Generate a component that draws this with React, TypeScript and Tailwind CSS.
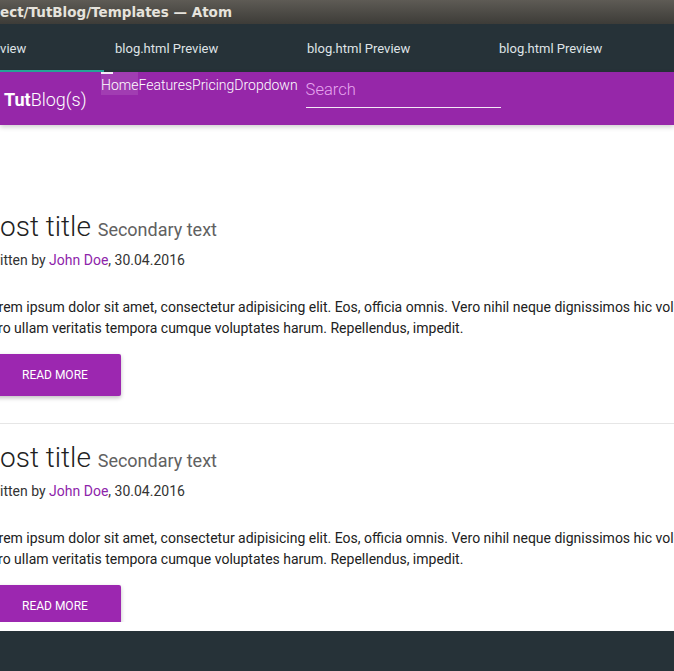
import React from 'react'

const roboto = { fontFamily: 'Roboto, "Liberation Sans", sans-serif' }

function Post() {
	return (
		<div>
			{/* Заголовок поста */}
			<h4 className="text-[28px] leading-[34px] font-light text-[#212121] whitespace-nowrap">
				Post title <span className="text-[18px] font-normal text-[#616161]">Secondary text</span>
			</h4>
			<p className="mt-[3px] text-[14px] leading-[21px] text-[#333] whitespace-nowrap">
				Written by <span className="text-[#8e24aa]">John Doe</span>, 30.04.2016
			</p>
			<p className="mt-[26px] text-[14px] leading-[21px] text-[#212121] whitespace-nowrap">
				Lorem ipsum dolor sit amet, consectetur adipisicing elit. Eos, officia omnis. Vero nihil neque dignissimos hic voluptatum.
				<br />
				<span className="-ml-[1px]">Vero ullam veritatis tempora cumque voluptates harum. Repellendus, impedit.</span>
			</p>
			<button className="mt-[15px] h-[42px] w-[138px] pl-[39px] bg-[#9c27b0] text-white text-[12px] uppercase rounded-[2px] shadow-[0_2px_4px_rgba(0,0,0,0.25)] flex items-center">
				Read more
			</button>
		</div>
	)
}

export default function App() {
	return (
		<div className="w-[674px] h-[671px] overflow-hidden flex flex-col bg-white" style={roboto}>
			{/* Заголовок окна */}
			<div className="h-[24px] shrink-0 bg-gradient-to-b from-[#5e5b55] to-[#3d3c38] flex items-center">
				<span
					className="text-[13.5px] font-bold text-[#e6e3dc] whitespace-nowrap"
					style={{ fontFamily: '"DejaVu Sans", sans-serif' }}
				>
					ect/TutBlog/Templates — Atom
				</span>
			</div>

			{/* Вкладки */}
			<div className="h-[48px] shrink-0 bg-[#263238] flex -ml-[88px]">
				{[0, 1, 2, 3].map(i => (
					<div
						key={i}
						className={`w-[192px] shrink-0 pl-[11px] pt-[3px] flex items-center text-[13px] text-[#dfe3e6] whitespace-nowrap border-b-2 ${i === 0 ? 'border-[#26a69a]' : 'border-transparent'}`}
					>
						blog.html Preview
					</div>
				))}
			</div>

			{/* Навбар */}
			<div className="h-[53px] shrink-0 bg-[#9627a9] flex shadow-[0_2px_5px_rgba(0,0,0,0.2)] relative z-10">
				<div className="w-[101px] shrink-0 pl-[4px] flex items-center pt-[1px] text-[18px] text-white whitespace-nowrap">
					<span className="font-bold">Tut</span>
					<span className="font-light">Blog(s)</span>
				</div>
				<div className="flex items-start text-[14px] font-light text-white whitespace-nowrap">
					<span className="relative h-[23px] bg-white/10 leading-[27px]">
						<span className="absolute left-0 top-0 w-[12px] h-[2px] bg-white/90" />
						Home
					</span>
					<span className="leading-[27px]">Features</span>
					<span className="leading-[27px]">Pricing</span>
					<span className="leading-[27px]">Dropdown</span>
				</div>
				<div className="ml-[8px] w-[195px] h-[36px] pt-[2px] border-b border-white/90 flex items-center">
					<span className="text-[16.5px] font-light text-[#e6a6ef]">Search</span>
				</div>
			</div>

			{/* Контент */}
			<div className="h-[497px] shrink-0 overflow-hidden -ml-[17px]">
				<div className="pt-[85px] pb-[27px] border-b border-[#e6e6e6]">
					<Post />
				</div>
				<div className="pt-[17px]">
					<Post />
				</div>
			</div>
			<div className="h-[9px] shrink-0 bg-white" />

			{/* Подвал */}
			<div className="flex-1 bg-[#263238]" />
		</div>
	)
}
